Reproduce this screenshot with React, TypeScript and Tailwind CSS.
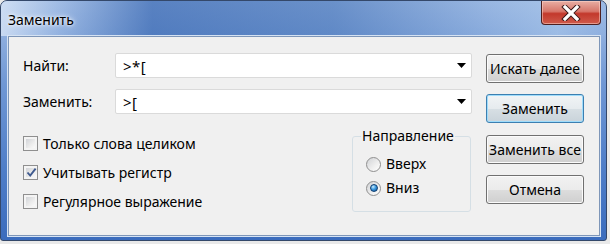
import React from 'react';

function ComboField({ value }: { value: string }) {
  return (
    <div className="flex-1 h-[25px] bg-white border border-[#dadada] rounded-[2px] flex items-center pl-[7px] pr-[5px]">
      <span className="flex-1 text-black text-[15px] tracking-[0.5px]">{value}</span>
      <svg width="9" height="5" viewBox="0 0 9 5">
        <path d="M0 0 H9 L4.5 5 Z" fill="#000" />
      </svg>
    </div>
  );
}

function Btn({ label, focused }: { label: string; focused?: boolean }) {
  return (
    <div
      className={
        focused
          ? 'h-[29px] w-[98px] rounded-[3px] border border-[#3c7fb1] shadow-[inset_0_0_0_1px_#9fdcfb] bg-[linear-gradient(180deg,#f1f4f6_0%,#e6ebee_50%,#d7dfe4_51%,#c9d3da_100%)] flex items-center justify-center text-black'
          : 'h-[29px] w-[98px] rounded-[3px] border border-[#707070] shadow-[inset_0_0_0_1px_#fbfbfb] bg-[linear-gradient(180deg,#f2f2f2_0%,#ebebeb_50%,#dddddd_51%,#cfcfcf_100%)] flex items-center justify-center text-black'
      }
    >
      <span className="whitespace-nowrap">{label}</span>
    </div>
  );
}

function Check({ label, checked }: { label: string; checked?: boolean }) {
  return (
    <div className="h-[29px] flex items-center">
      <span className="w-[15px] h-[15px] border border-[#8f8f8f] bg-[#f4f4f4] p-[2px] flex">
        <span className="flex-1 bg-[linear-gradient(135deg,#d2d4d8_0%,#ececec_60%,#fafafa_100%)] flex items-center justify-center">
          {checked && (
            <svg width="11" height="11" viewBox="0 0 11 11" className="shrink-0">
              <path d="M1.5 5.5 L4.2 8.6 L9.6 1.6" fill="none" stroke="#3f5a8f" strokeWidth="1.9" />
            </svg>
          )}
        </span>
      </span>
      <span className="ml-[5px] text-black">{label}</span>
    </div>
  );
}

function Radio({ label, selected }: { label: string; selected?: boolean }) {
  return (
    <div className="h-[24px] flex items-center">
      <span className="w-[15px] h-[15px] rounded-full border border-[#8f8f8f] bg-[linear-gradient(135deg,#d0d2d5_0%,#f0f0f0_60%,#ffffff_100%)] flex items-center justify-center">
        {selected && (
          <span className="w-[8px] h-[8px] rounded-full border border-[#0d3d70] bg-[radial-gradient(circle_at_35%_30%,#c9ecff_0%,#3d9be0_45%,#0f4f94_100%)]" />
        )}
      </span>
      <span className="ml-[5px] text-black">{label}</span>
    </div>
  );
}

export default function App() {
  return (
    <div className="w-[610px] h-[244px] bg-[#e9e9e9] font-['Noto_Sans',sans-serif] text-[14px] leading-[18px] overflow-hidden">
      <div className="w-[607px] h-[241px] rounded-t-[7px] rounded-b-[3px] border border-[#34486a] bg-[linear-gradient(180deg,#a3bee5_0%,#6f97d4_35%,#4f7ec8_70%,#3b6cbd_100%)] flex flex-col overflow-hidden">
        {/* Title bar */}
        <div className="h-[35px] flex items-start bg-[linear-gradient(90deg,rgba(220,232,248,0.75)_0%,rgba(150,180,225,0.3)_10%,rgba(40,90,170,0.6)_25%,rgba(50,100,175,0.5)_55%,rgba(120,160,215,0.25)_80%,rgba(170,200,235,0.5)_92%,rgba(140,175,225,0.3)_100%)]">
          <span className="ml-[7px] mt-[10px] text-[14px] text-black [text-shadow:0_0_6px_#ffffff,0_0_3px_#ffffff]">Заменить</span>
          <div className="ml-auto mr-[5px] w-[60px] h-[24px] rounded-b-[4px] border border-t-0 border-[#4d1f1f] bg-[linear-gradient(180deg,#e8aea4_0%,#d7776b_45%,#c3392c_55%,#cf5a4b_100%)] shadow-[inset_0_0_0_1px_rgba(255,220,210,0.5)] flex items-center justify-center">
            <svg width="20" height="16" viewBox="0 0 20 16">
              <path d="M4 2 L16 14 M16 2 L4 14" stroke="#3a1a1a" strokeWidth="5.2" strokeLinecap="square" />
              <path d="M4 2 L16 14 M16 2 L4 14" stroke="#ffffff" strokeWidth="3.2" strokeLinecap="square" />
            </svg>
          </div>
        </div>
        {/* Client */}
        <div className="flex-1 pl-[7px] pr-[6px] pb-[4px] flex">
          <div className="flex-1 bg-[#f0f0f0] border border-[#7e96b8] shadow-[0_0_0_1px_#d6e3f3] flex pl-[14px] pt-[16px] pr-[15px]">
            {/* Left column */}
            <div className="w-[449px] flex flex-col">
              <div className="flex items-center">
                <span className="w-[92px] text-black">Найти:</span>
                <ComboField value=">*[" />
              </div>
              <div className="flex items-center mt-[11px]">
                <span className="w-[92px] text-black">Заменить:</span>
                <ComboField value=">[" />
              </div>
              <div className="flex mt-[15px]">
                <div className="flex flex-col">
                  <Check label="Только слова целиком" />
                  <Check label="Учитывать регистр" checked />
                  <Check label="Регулярное выражение" />
                </div>
                <fieldset className="ml-auto mr-[1px] mt-[-2px] w-[119px] h-[85px] border border-[#d5dfe5] rounded-[3px] pl-[13px]">
                  <legend className="ml-[-5px] px-[1px] text-black">Направление</legend>
                  <div className="mt-[7px]">
                    <Radio label="Вверх" />
                    <Radio label="Вниз" selected />
                  </div>
                </fieldset>
              </div>
            </div>
            {/* Buttons */}
            <div className="ml-[14px] w-[98px] flex flex-col pt-[1px]">
              <Btn label="Искать далее" />
              <div className="mt-[11px]">
                <Btn label="Заменить" focused />
              </div>
              <div className="mt-[12px]">
                <Btn label="Заменить все" />
              </div>
              <div className="mt-[11px]">
                <Btn label="Отмена" />
              </div>
            </div>
          </div>
        </div>
      </div>
    </div>
  );
}
